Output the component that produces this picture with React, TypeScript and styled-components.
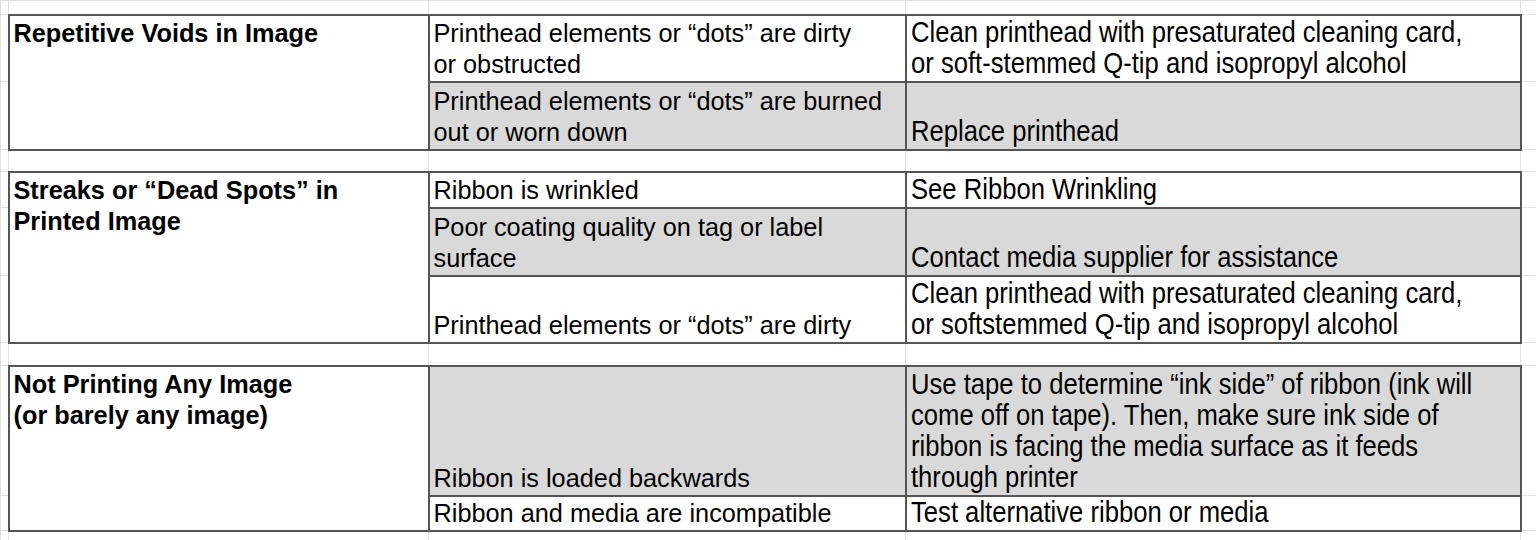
import React from "react";
import styled, { createGlobalStyle } from "styled-components";

const GlobalStyle = createGlobalStyle`
  html, body {
    margin: 0;
    padding: 0;
    background: #fff;
    overflow: hidden;
  }
  body {
    font-family: "Liberation Sans", Arial, sans-serif;
    color: #000;
  }
`;

const Sheet = styled.table`
  border-collapse: collapse;
  table-layout: fixed;
  width: 1576px;
  font-size: 25.3px;
  line-height: 31px;
`;

const Row = styled.tr<{ $h: number }>`
  height: ${(p) => p.$h}px;
`;

// empty spreadsheet cell, only the faint gridline
const Blank = styled.td`
  border: 1px solid #e3e3e3;
  padding: 0;
`;

const Cell = styled.td<{ $shaded?: boolean }>`
  border: 2px solid #555;
  padding: 0 4px 1px 4px;
  vertical-align: bottom;
  background: ${(p) => (p.$shaded ? "#d9d9d9" : "#fff")};
  white-space: pre-line;
  overflow: hidden;
`;

const Title = styled(Cell)`
  vertical-align: top;
  padding-top: 2px;
  font-weight: 700;
`;

// the fix column is set in a taller, horizontally condensed face
const Narrow = styled.span`
  display: inline-block;
  font-size: 28.8px;
  line-height: 31px;
  white-space: pre;
  transform: scaleX(0.89);
  transform-origin: left bottom;
`;

type Step = { h: number; shaded?: boolean; cause: string; fix: string };
type Block = { title: string; gapBefore: number; rows: Step[] };

const blocks: Block[] = [
  {
    title: "Repetitive Voids in Image",
    gapBefore: 14,
    rows: [
      {
        h: 67,
        cause: "Printhead elements or “dots” are dirty\nor obstructed",
        fix: "Clean printhead with presaturated cleaning card,\nor soft-stemmed Q-tip and isopropyl alcohol",
      },
      {
        h: 68,
        shaded: true,
        cause: "Printhead elements or “dots” are burned\nout or worn down",
        fix: "Replace printhead",
      },
    ],
  },
  {
    title: "Streaks or “Dead Spots” in\nPrinted Image",
    gapBefore: 22,
    rows: [
      { h: 36, cause: "Ribbon is wrinkled", fix: "See Ribbon Wrinkling" },
      {
        h: 68,
        shaded: true,
        cause: "Poor coating quality on tag or label\nsurface",
        fix: "Contact media supplier for assistance",
      },
      {
        h: 67,
        cause: "Printhead elements or “dots” are dirty",
        fix: "Clean printhead with presaturated cleaning card,\nor softstemmed Q-tip and isopropyl alcohol",
      },
    ],
  },
  {
    title: "Not Printing Any Image\n(or barely any image)",
    gapBefore: 23,
    rows: [
      {
        h: 130,
        shaded: true,
        cause: "Ribbon is loaded backwards",
        fix: "Use tape to determine “ink side” of ribbon (ink will\ncome off on tape). Then, make sure ink side of\nribbon is facing the media surface as it feeds\nthrough printer",
      },
      {
        h: 35,
        cause: "Ribbon and media are incompatible",
        fix: "Test alternative ribbon or media",
      },
    ],
  },
];

function GapRow({ h }: { h: number }) {
  return (
    <Row $h={h}>
      <Blank />
      <Blank />
      <Blank />
      <Blank />
      <Blank />
    </Row>
  );
}

export default function App() {
  return (
    <>
      <GlobalStyle />
      <Sheet>
        <colgroup>
          <col style={{ width: 8 }} />
          <col style={{ width: 420 }} />
          <col style={{ width: 477 }} />
          <col style={{ width: 615 }} />
          <col style={{ width: 56 }} />
        </colgroup>
        <tbody>
          {blocks.map((b) => (
            <React.Fragment key={b.title}>
              <GapRow h={b.gapBefore} />
              {b.rows.map((r, i) => (
                <Row $h={r.h} key={i}>
                  <Blank />
                  {i === 0 && <Title rowSpan={b.rows.length}>{b.title}</Title>}
                  <Cell $shaded={r.shaded}>{r.cause}</Cell>
                  <Cell $shaded={r.shaded}>
                    <Narrow>{r.fix}</Narrow>
                  </Cell>
                  <Blank />
                </Row>
              ))}
            </React.Fragment>
          ))}
          <GapRow h={20} />
        </tbody>
      </Sheet>
    </>
  );
}
